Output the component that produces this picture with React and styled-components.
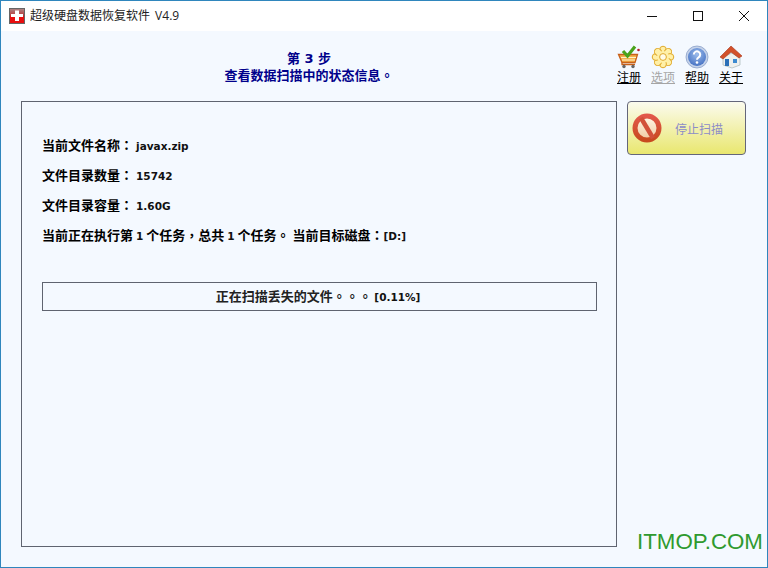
import React from "react";
import styled, { createGlobalStyle } from "styled-components";

const Global = createGlobalStyle`
  html, body { margin: 0; padding: 0; height: 100%; overflow: hidden; }
  * { box-sizing: border-box; }
`;
const cjk = `"Noto Sans CJK SC", sans-serif`;
const mixed = `"DejaVu Sans", "Noto Sans CJK SC", sans-serif`;

const Window = styled.div`
  position: relative; width: 768px; height: 568px; display: flex; flex-direction: column;
  border: 1px solid #2f86bd;
  background: #f4f9ff; font-family: ${mixed}; color: #000;
`;
const TitleBar = styled.div`
  height: 30px; flex: none; background: #fff; display: flex; align-items: center; padding-left: 8px;
`;
const AppIcon = styled.svg`width: 16px; height: 16px; flex: none;`;
const AppTitle = styled.div`
  margin-left: 5px; font: 12px "Open Sans", ${cjk}; color: #222; line-height: 16px; word-spacing: 2px;
`;
const Caps = styled.div`margin-left: auto; display: flex; height: 100%;`;
const Cap = styled.div`
  width: 46px; height: 30px; display: flex; align-items: center; justify-content: center;
`;
const CapIcon = styled.svg`width: 12px; height: 12px; stroke: #111; fill: none; stroke-width: 1;`;
const Header = styled.div`
  height: 70px; flex: none; display: flex; padding-left: 20px;
`;
const Heading = styled.div`
  width: 576px; padding-top: 20px; text-align: center; font-weight: 700; color: #00008b;
  font-size: 13px; font-family: ${mixed}; text-spacing-trim: space-all;
`;
const HeadLine = styled.div`height: 16px; line-height: 16px;`;
const Tools = styled.div`
  margin-left: 20px; padding-top: 14px; display: flex; gap: 10px;
`;
const Tool = styled.div`
  width: 24px; display: flex; flex-direction: column; align-items: center; font: 12px/14px ${cjk};
  color: ${p => p.$off ? "#a5a5a5" : "#000"}; text-decoration: underline; white-space: nowrap;
`;
const ToolIcon = styled.svg`width: 24px; height: 24px; margin-bottom: 1px; flex: none;`;
const Body = styled.div`
  flex: 1; display: flex; padding-left: 20px; gap: 10px;
`;
const Panel = styled.div`
  width: 596px; height: 446px; border: 1px solid #5f6470; padding: 35px 19px 0 20px;
`;
const Row = styled.div`
  height: 16px; margin-bottom: 14px; display: flex; align-items: baseline; white-space: pre;
  text-spacing-trim: space-all;
`;
const Label = styled.span`font: 700 13px/16px ${cjk};`;
const Punct = styled.span`font: 700 13px/16px "Noto Sans CJK TC", sans-serif;`;
const Val = styled.span`color: #111; font: 700 10.5px/16px "DejaVu Sans", sans-serif; margin-left: ${p => p.$gap || 0}px;`;
const Progress = styled.div`
  margin-top: 39px; height: 29px; border: 1px solid #5f6470; display: flex; align-items: baseline; justify-content: center;
  padding: 5px 3px 0 0; color: #222; white-space: pre; text-spacing-trim: space-all;
`;
const StopBtn = styled.div`
  width: 119px; height: 54px; border: 1px solid #64667a; border-radius: 4px;
  background: linear-gradient(#fbfbee, #e9e76f);
  display: flex; align-items: center; padding-left: 4px;
`;
const StopIcon = styled.svg`width: 30px; height: 30px; flex: none;`;
const StopText = styled.span`margin-left: 13px; font: 12px ${cjk}; color: #8c8cc8;`;
const Mark = styled.div`
  position: absolute; left: 636px; top: 528px; font: 22.3px/26px "Liberation Sans", sans-serif; color: #2f9a2f;
`;

export default function App() {
  const petals = [0, 45, 90, 135, 180, 225, 270, 315];
  return (
    <Window>
      <Global />
      <TitleBar>
        <AppIcon viewBox="0 0 16 16">
          <defs>
            <linearGradient id="ai" x1="0" y1="0" x2="0" y2="1"><stop offset="0" stopColor="#a88" /><stop offset=".5" stopColor="#b33" /><stop offset=".55" stopColor="#e80f0f" /><stop offset="1" stopColor="#e80f0f" /></linearGradient>
          </defs>
          <rect x=".5" y=".5" width="15" height="15" fill="url(#ai)" stroke="#666" />
          <path d="M6 2.5h4v3.5h4v3h-4v4H6V9H2V6h4z" fill="#fff" />
        </AppIcon>
        <AppTitle>超级硬盘数据恢复软件 V4.9</AppTitle>
        <Caps>
          <Cap><CapIcon viewBox="0 0 12 12"><path d="M1 6.5h10" /></CapIcon></Cap>
          <Cap><CapIcon viewBox="0 0 12 12"><rect x="1.5" y="1.5" width="9" height="9" /></CapIcon></Cap>
          <Cap><CapIcon viewBox="0 0 12 12"><path d="M1 1l10 10M11 1L1 11" /></CapIcon></Cap>
        </Caps>
      </TitleBar>
      <Header>
        <Heading>
          <HeadLine>第 3 步</HeadLine>
          <HeadLine>查看数据扫描中的状态信息<Punct>。</Punct></HeadLine>
        </Heading>
        <Tools>
          <Tool>
            <ToolIcon viewBox="0 0 24 24">
              <path d="M1.5 9.5h19l-2.5 8H5z" fill="#f4b04a" stroke="#c8611a" strokeWidth="1.3" />
              <path d="M4 12.5h15M5 15h13" stroke="#fff2c8" strokeWidth="1" />
              <path d="M5 17.5v2h13" fill="none" stroke="#c8611a" strokeWidth="1.3" />
              <circle cx="7" cy="21.5" r="1.7" fill="#666" /><circle cx="16" cy="21.5" r="1.7" fill="#666" />
              <path d="M6 6l4.5 5L18 1.5" fill="none" stroke="#4aa31b" strokeWidth="3.2" />
              <circle cx="21.5" cy="5" r="1.3" fill="#b8202a" />
            </ToolIcon>
            注册
          </Tool>
          <Tool $off>
            <ToolIcon viewBox="0 0 24 24">
              {petals.map(a => (
                <ellipse key={a} cx="12" cy="5" rx="3.4" ry="3.8" fill="#fff0a8" stroke="#e0a92a" strokeWidth="1" transform={`rotate(${a} 12 12)`} />
              ))}
              <circle cx="12" cy="12" r="6" fill="#fff0a8" />
              <circle cx="12" cy="12" r="3.4" fill="#fffbe6" stroke="#e0a92a" />
            </ToolIcon>
            选项
          </Tool>
          <Tool>
            <ToolIcon viewBox="0 0 24 24">
              <defs>
                <radialGradient id="hb" cx="50%" cy="35%" r="65%"><stop offset="0" stopColor="#9dbdec" /><stop offset="1" stopColor="#4773c4" /></radialGradient>
              </defs>
              <circle cx="12" cy="12" r="11" fill="#c5d3ea" stroke="#8aa0c8" strokeWidth=".8" />
              <circle cx="12" cy="12" r="9" fill="url(#hb)" />
              <path d="M8.8 9.5a3.2 3.2 0 1 1 4.8 2.8c-1 .6-1.6 1.1-1.6 2.5" fill="none" stroke="#fff" strokeWidth="2" />
              <circle cx="12" cy="17.5" r="1.3" fill="#fff" />
            </ToolIcon>
            帮助
          </Tool>
          <Tool>
            <ToolIcon viewBox="0 0 24 24">
              <path d="M4 12l9-4 8 5v7l-8 3-9-3z" fill="#eef0ee" stroke="#9aa" strokeWidth=".6" />
              <path d="M1 12L12 1l11 10-3 2-8-6-8 7z" fill="#d2502a" stroke="#a8361a" strokeWidth=".6" />
              <rect x="6" y="14" width="4" height="7" fill="#2a6fb8" />
              <rect x="14" y="14" width="4" height="4" fill="#3b8ad0" />
            </ToolIcon>
            关于
          </Tool>
        </Tools>
      </Header>
      <Body>
        <Panel>
          <Row><Label>当前文件名称</Label><Punct>：</Punct><Val $gap={3}>javax.zip</Val></Row>
          <Row><Label>文件目录数量</Label><Punct>：</Punct><Val $gap={3}>15742</Val></Row>
          <Row><Label>文件目录容量</Label><Punct>：</Punct><Val $gap={3}>1.60G</Val></Row>
          <Row>
            <Label>当前正在执行第 </Label><Val>1</Val><Label> 个任务</Label><Punct>，</Punct><Label>总共 </Label><Val>1</Val><Label> 个任务</Label><Punct>。</Punct><Label> 当前目标磁盘</Label><Punct>：</Punct><Val>[D:]</Val>
          </Row>
          <Progress>
            <Label>正在扫描丢失的文件</Label><Punct>。。。</Punct><Val $gap={-1}> [0.11%]</Val>
          </Progress>
        </Panel>
        <StopBtn>
          <StopIcon viewBox="0 0 30 30">
            <defs>
              <linearGradient id="st" x1="0" y1="0" x2="0" y2="1"><stop offset="0" stopColor="#e2584a" /><stop offset="1" stopColor="#c8491e" /></linearGradient>
              <linearGradient id="sf" x1="0" y1="0" x2="0" y2="1"><stop offset="0" stopColor="#fff8e8" /><stop offset="1" stopColor="#f0c8a0" /></linearGradient>
            </defs>
            <circle cx="15" cy="15" r="12" fill="url(#sf)" stroke="url(#st)" strokeWidth="5" />
            <path d="M9 5l12 20" stroke="#d2503a" strokeWidth="4.5" />
          </StopIcon>
          <StopText>停止扫描</StopText>
        </StopBtn>
      </Body>
      <Mark>ITMOP.COM</Mark>
    </Window>
  );
}
